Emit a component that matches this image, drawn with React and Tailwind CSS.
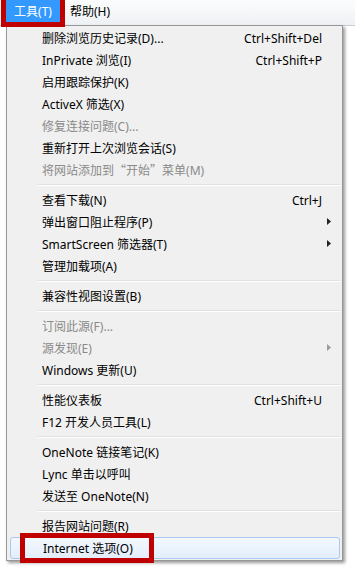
import React from "react";

const groups = [
  [
    { label: "删除浏览历史记录(D)...", key: "Ctrl+Shift+Del" },
    { label: "InPrivate 浏览(I)", key: "Ctrl+Shift+P" },
    { label: "启用跟踪保护(K)" },
    { label: "ActiveX 筛选(X)" },
    { label: "修复连接问题(C)...", disabled: true },
    { label: "重新打开上次浏览会话(S)" },
    { label: "将网站添加到“开始”菜单(M)", disabled: true },
  ],
  [
    { label: "查看下载(N)", key: "Ctrl+J" },
    { label: "弹出窗口阻止程序(P)", sub: true },
    { label: "SmartScreen 筛选器(T)", sub: true },
    { label: "管理加载项(A)" },
  ],
  [{ label: "兼容性视图设置(B)" }],
  [
    { label: "订阅此源(F)...", disabled: true },
    { label: "源发现(E)", disabled: true, sub: true },
    { label: "Windows 更新(U)" },
  ],
  [
    { label: "性能仪表板", key: "Ctrl+Shift+U" },
    { label: "F12 开发人员工具(L)" },
  ],
  [
    { label: "OneNote 链接笔记(K)" },
    { label: "Lync 单击以呼叫" },
    { label: "发送至 OneNote(N)" },
  ],
  [{ label: "报告网站问题(R)" }, { label: "Internet 选项(O)", active: true }],
];

// curly quotes need the CJK font so they come out full width
const Label = ({ text }) =>
  text.split(/([“”])/).map((part, i) =>
    part === "“" || part === "”" ? (
      <span key={i} style={{ fontFamily: "'Noto Sans CJK SC', sans-serif" }}>
        {part}
      </span>
    ) : (
      part
    )
  );

const Arrow = ({ disabled }) => (
  <svg width="4" height="7" viewBox="0 0 4 7">
    <path d="M0 0 L4 3.5 L0 7 Z" fill={disabled ? "#9a9a9a" : "#222"} />
  </svg>
);

const Row = ({ item }) => (
  <div
    className={`h-[22px] flex items-center pt-[1px] ${
      item.active
        ? "ml-[3px] mr-[2px] pl-[32px] pr-[18px] rounded-[3px] border border-[#a9c9ee] bg-gradient-to-b from-[#f3f8fe] to-[#e3eefb]"
        : "pl-[35px] pr-[20px]"
    }`}
  >
    <span className={`flex-1 whitespace-nowrap ${item.disabled ? "text-[#8a8a8a]" : "text-black"}`}>
      <Label text={item.label} />
    </span>
    {item.key && <span className="whitespace-nowrap text-black">{item.key}</span>}
    {item.sub && (
      <span className="w-0 relative">
        <span className="absolute left-[5px] top-[-5px]">
          <Arrow disabled={item.disabled} />
        </span>
      </span>
    )}
  </div>
);

export default function App() {
  return (
    <div
      className="w-[355px] h-[572px] bg-white relative overflow-hidden text-[12px] leading-none"
      style={{ fontFamily: "'Noto Sans', 'Noto Sans CJK SC', sans-serif" }}
    >
      {/* menu bar */}
      <div className="h-[26px] flex items-start bg-gradient-to-b from-[#fbfcfd] to-[#eef1f5] border-b border-[#c9ced6]">
        <div className="ml-[6px] w-[54px] h-[22px] bg-[#3399ff] text-white flex items-center justify-center pt-[1px]">
          工具(T)
        </div>
        <div className="ml-[10px] h-[22px] flex items-center pt-[1px] text-black">帮助(H)</div>
      </div>

      {/* dropdown */}
      <div className="ml-[6px] w-[337px] -mt-px border border-[#979797] bg-[#f0f0f0] pt-[1px] pb-[1px] shadow-[2px_2px_3px_rgba(0,0,0,0.4)]">
        {groups.map((g, gi) => (
          <div key={gi}>
            {gi > 0 && (
              <div className="h-[8px] flex flex-col justify-center pl-[30px] pr-[2px]">
                <div className="border-t border-[#e0e0e0]" />
                <div className="border-t border-white" />
              </div>
            )}
            {g.map((item) => (
              <Row key={item.label} item={item} />
            ))}
          </div>
        ))}
      </div>

      {/* annotation boxes */}
      <div className="absolute left-[1px] top-[-5px] w-[64px] h-[32px] border-[5px] border-[#c00000]" />
      <div className="absolute left-[20px] top-[533px] w-[134px] h-[30px] border-[5px] border-[#c00000]" />
    </div>
  );
}
